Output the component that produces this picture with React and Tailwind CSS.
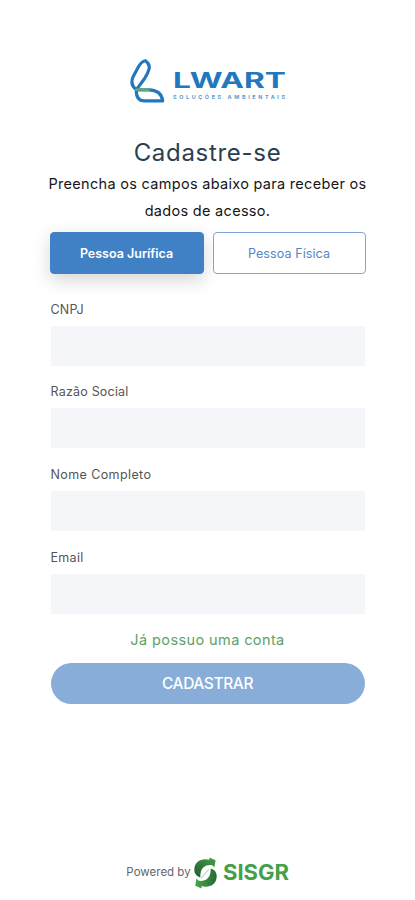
import { useState } from 'react';

const fields = [
  { id: 'cnpj', label: 'CNPJ', type: 'text', spacing: 'tracking-[0.2px]' },
  { id: 'razao', label: 'Razão Social', type: 'text', spacing: 'tracking-[0.2px]' },
  { id: 'nome', label: 'Nome Completo', type: 'text', spacing: 'tracking-[0.4px]' },
  { id: 'email', label: 'Email', type: 'email', spacing: 'tracking-[0.3px]' },
];

function LwartLogo() {
  return (
    <svg className="block w-[160px] h-[48px]" viewBox="0 0 160 48" role="img" aria-label="Lwart">
      <g fill="none" strokeWidth="3.2" strokeLinejoin="round" strokeLinecap="round">
        <path stroke="#2378bd" d="M8.4 32.6C4 29.5 2.8 25.3 5 20L10.6 9.6C12.3 6.4 14.4 4.3 17.4 3.7C20.5 5.8 21.9 8.6 21 12.2C20.2 15.5 18.7 18.3 16.8 21.2L8.4 32.6Z" />
        <path stroke="#2378bd" d="M8.4 32.8L21 32.8C29.2 33 33.8 36.4 34.7 43.9H16.5C10.6 43.9 7.9 39.9 8.4 32.8Z" />
        <path stroke="#63aa78" strokeWidth="2.6" d="M8.2 32.8C12.1 32.3 16.5 32.2 20.4 32.8" />
      </g>
      <text x="45" y="31.3" textLength="113" lengthAdjust="spacingAndGlyphs" className="font-['Inter',sans-serif] font-bold text-[21px] fill-[#2378bd]">LWART</text>
      <text x="45" y="41.8" textLength="112" lengthAdjust="spacing" className="font-['Inter',sans-serif] font-bold text-[5.4px] fill-[#5c9bcb]">SOLUÇÕES AMBIENTAIS</text>
    </svg>
  );
}

function SisgrLogo() {
  return (
    <svg className="block w-[98px] h-[34px]" viewBox="0 0 98 34" role="img" aria-label="Sisgr">
      <defs>
        <linearGradient id="leafTop" x1="0" y1="1" x2="1" y2="0">
          <stop offset="0" stopColor="#1f5c31" />
          <stop offset="1" stopColor="#45a049" />
        </linearGradient>
        <linearGradient id="leafBottom" x1="0" y1="0" x2="1" y2="0">
          <stop offset="0" stopColor="#49a848" />
          <stop offset="1" stopColor="#236a35" />
        </linearGradient>
      </defs>
      <path fill="url(#leafTop)" d="M17.3 1.4L23.6 4.2L22.4 11.2L20.2 9.2C13.6 8.4 9.6 11.6 8.6 17.2C8.3 18.8 8.2 20.2 8.4 21.4C4.6 20.4 2.3 17.6 2.3 13.8C2.3 7.2 7.2 3.2 13.6 3.3L17.6 3.8Z" />
      <path fill="url(#leafBottom)" d="M9.7 32.4L3.2 29.8L4.4 22.6L6.8 24.8C13.4 25.6 17.4 22.4 18.4 16.8C18.7 15.2 18.8 13.8 18.6 12.6C22.4 13.6 24.7 16.4 24.7 20.2C24.7 26.8 19.8 30.8 13.4 30.7L9.4 30.2Z" />
      <path fill="none" stroke="#8bc48d" strokeWidth="0.9" d="M9.4 22.4C11.2 19.6 13.8 16.6 16.8 13.4" />
      <text x="31" y="24" textLength="66" lengthAdjust="spacingAndGlyphs" className="font-['Inter',sans-serif] font-bold text-[21px] fill-[#45a049]">SISGR</text>
    </svg>
  );
}

export default function App() {
  const [person, setPerson] = useState('juridica');
  const active = 'bg-[#4080c4] border-[#4080c4] text-white font-semibold shadow-[0_6px_18px_rgba(0,0,0,0.17)]';
  const inactive = 'bg-white border-[#7fa4d6] text-[#5387c5] font-normal tracking-[0.1px]';

  return (
    <div className="h-[900px] w-full bg-white flex flex-col items-center pt-[57px] font-['Inter',sans-serif] overflow-hidden">
      <div className="ml-[1px]">
        <LwartLogo />
      </div>

      <h1 className="mt-[32px] h-[32px] leading-8 text-[24px] tracking-[0.7px] text-[#2b3f52] whitespace-nowrap">Cadastre-se</h1>
      <p className="mt-[1px] text-center text-[14.5px] leading-[27px] tracking-[0.3px] text-[#161616] whitespace-nowrap">
        Preencha os campos abaixo para receber os
        <br />
        dados de acesso.
      </p>

      <div className="mt-[8px] w-[316px] flex gap-[9px]">
        <button
          onClick={() => setPerson('juridica')}
          className={`w-[154px] h-[42px] pt-[2px] rounded-[4px] border text-[12.5px] ${person === 'juridica' ? active : inactive}`}
        >
          Pessoa Jurífica
        </button>
        <button
          onClick={() => setPerson('fisica')}
          className={`w-[153px] h-[42px] pt-[2px] rounded-[4px] border text-[12.5px] ${person === 'fisica' ? active : inactive}`}
        >
          Pessoa Física
        </button>
      </div>

      <form className="mt-[24.5px] w-[314px] flex flex-col" onSubmit={(e) => e.preventDefault()}>
        {fields.map((field) => (
          <div key={field.id} className="h-[82.7px]">
            <label htmlFor={field.id} className={`block h-[27px] leading-[22px] text-[12.5px] text-[#555555] ${field.spacing}`}>
              {field.label}
            </label>
            <input id={field.id} type={field.type} className="block w-full h-[40px] px-3 text-sm bg-[#f4f6fa] outline-none" />
          </div>
        ))}
        <a href="#" className="-mt-[1px] self-center h-[24px] leading-6 text-[14.5px] tracking-[0.4px] text-[#5da168]">Já possuo uma conta</a>
        <button className="mt-[10.5px] h-[41px] w-full rounded-full bg-[#87add8] text-white text-[15.5px] font-medium tracking-[-0.4px]">
          CADASTRAR
        </button>
      </form>

      <footer className="mt-auto mb-[10px] ml-[1px] flex items-center gap-[1px]">
        <span className="text-[11.5px] text-[#666666] whitespace-nowrap">Powered by</span>
        <SisgrLogo />
      </footer>
    </div>
  );
}
